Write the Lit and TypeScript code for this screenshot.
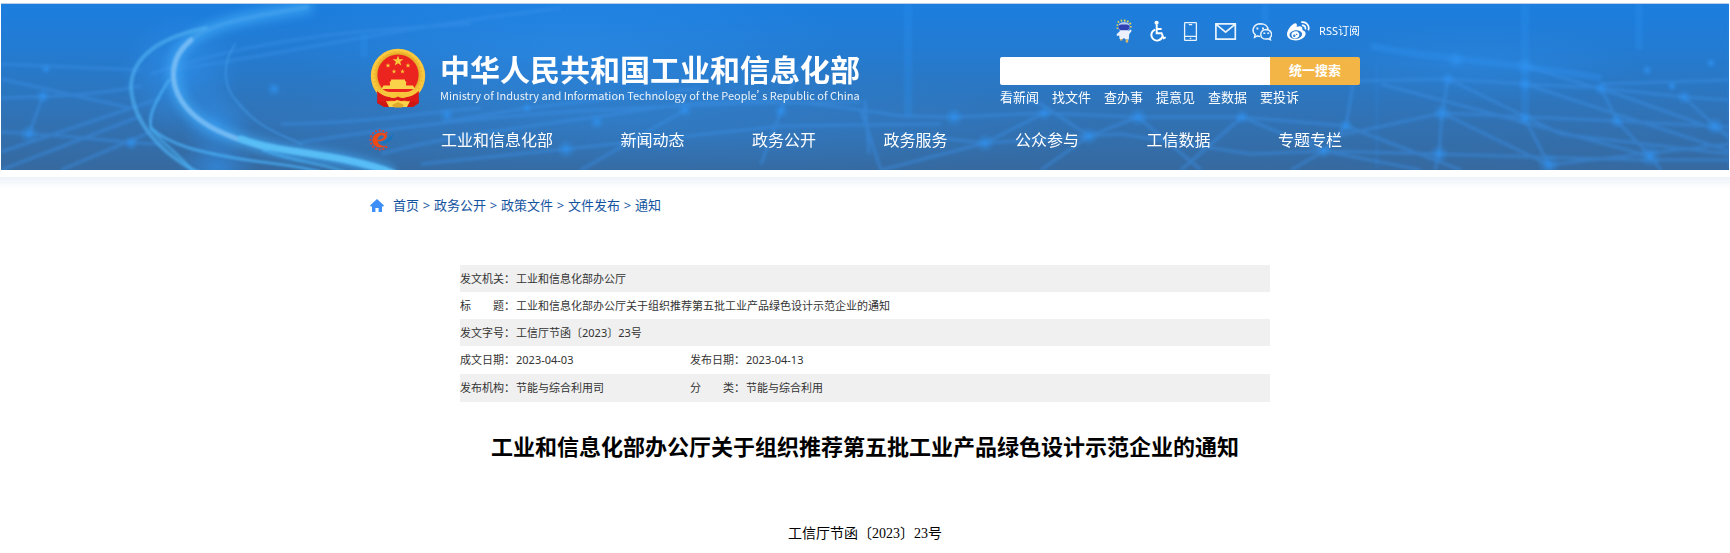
import { LitElement, html, svg, css } from "lit";
import { customElement, property } from "lit/decorators.js";

const NAV = ["工业和信息化部", "新闻动态", "政务公开", "政务服务", "公众参与", "工信数据", "专题专栏"];
const QUICK = ["看新闻", "找文件", "查办事", "提意见", "查数据", "要投诉"];
const CRUMBS = ["首页", "政务公开", "政策文件", "文件发布", "通知"];

const star = (cx: number, cy: number, r: number) => {
  const pts = Array.from({ length: 10 }, (_, i) => {
    const a = (Math.PI / 5) * i - Math.PI / 2;
    const q = i % 2 ? r * 0.4 : r;
    return `${(cx + q * Math.cos(a)).toFixed(2)},${(cy + q * Math.sin(a)).toFixed(2)}`;
  });
  return svg`<polygon points=${pts.join(" ")} fill="#f9c93c" />`;
};

@customElement("banner-backdrop")
class BannerBackdrop extends LitElement {
  static styles = css`
    :host { display: block; }
    svg { display: block; width: 100%; height: 100%; }
  `;

  render() {
    const nodes = [
      [42, 92, 4], [28, 130, 5], [130, 139, 4], [45, 65, 3], [273, 85, 4], [446, 111, 4], [526, 104, 3],
      [565, 145, 5], [596, 118, 4], [684, 106, 4], [780, 107, 4], [953, 113, 5], [984, 139, 5], [1043, 109, 4],
      [1088, 132, 5], [1137, 113, 5], [1241, 113, 4], [1345, 122, 4], [1323, 147, 4], [1447, 75, 4], [1441, 109, 5],
      [1438, 150, 5], [1524, 62, 5], [1524, 80, 4], [1524, 115, 4], [1548, 161, 6], [1600, 84, 4], [1616, 117, 4],
      [1649, 152, 6], [1683, 93, 4], [1714, 122, 5], [1646, 66, 3], [1671, 82, 3], [1710, 59, 3], [1455, 56, 5],
    ];
    return html`
      <svg viewBox="0 0 1728 166" preserveAspectRatio="none" aria-hidden="true">
        <defs>
          <linearGradient id="base" x1="0" y1="0" x2="0" y2="1">
            <stop offset="0" stop-color="#1c7edf" />
            <stop offset="0.3" stop-color="#247bd0" />
            <stop offset="0.65" stop-color="#3073b7" />
            <stop offset="1" stop-color="#36699f" />
          </linearGradient>
          <radialGradient id="glow">
            <stop offset="0" stop-color="#2f93f2" stop-opacity="0.6" />
            <stop offset="1" stop-color="#2f93f2" stop-opacity="0" />
          </radialGradient>
          <filter id="soft" x="-10%" y="-20%" width="120%" height="140%"><feGaussianBlur stdDeviation="1.2" /></filter>
          <filter id="haze" x="-10%" y="-20%" width="120%" height="140%"><feGaussianBlur stdDeviation="1.6" /></filter>
          <filter id="wide" x="-20%" y="-20%" width="140%" height="140%"><feGaussianBlur stdDeviation="5" /></filter>
        </defs>
        <rect width="1728" height="166" fill="url(#base)" />
        <ellipse cx="570" cy="45" rx="280" ry="80" fill="url(#glow)" opacity="0.7" />
        <ellipse cx="180" cy="70" rx="60" ry="60" fill="url(#glow)" />
        <ellipse cx="216" cy="120" rx="36" ry="36" fill="url(#glow)" />
        <ellipse cx="640" cy="120" rx="460" ry="60" fill="url(#glow)" opacity="0.45" />
        <ellipse cx="1480" cy="60" rx="160" ry="40" fill="url(#glow)" opacity="0.5" />
        <ellipse cx="216" cy="163" rx="40" ry="26" fill="url(#glow)" />

        <g fill="none" stroke="#3a92ea" stroke-width="3" filter="url(#haze)" opacity="0.46">
          <path d="M0 94C50 92 90 92 140 82M0 128C80 132 110 138 160 140M0 148L160 94M0 60L140 66M28 130L42 92M0 75L130 104M60 166L150 128M0 166L140 112" />
          <path d="M150 70C250 36 350 26 470 20M172 66C280 50 420 20 560 4M280 120C390 118 420 108 480 104M300 138C420 120 560 100 860 98M420 160L565 145L780 122L940 120" />
          <path d="M380 150C450 130 540 122 640 106S800 96 900 112M440 118L526 104L700 84M580 166L684 106M760 160L780 107L800 60M860 106L880 166M864 96L868 150" />
          <path d="M900 112L953 113L1043 109L1137 113L1241 113L1345 122M900 130L984 139L1120 130L1250 150L1323 147L1438 150L1640 156L1728 156" />
          <path d="M880 166L984 139L1043 109M1088 132L1040 100L1000 90M1137 113L1088 132L1040 166M1137 113L1200 166M1241 113L1180 166M1345 122L1323 147L1290 166M1241 113L1323 147L1420 166" />
          <path d="M1300 140L1441 109L1616 117L1728 123M1200 80L1447 75L1524 80L1600 84L1683 93L1728 96M1447 75L1441 109L1438 150L1434 166M1345 122L1352 80M1345 122L1460 166M1441 109L1548 161M1524 115L1548 161L1728 140" />
          <path d="M1600 84L1616 117L1649 152L1660 166M1683 93L1714 122L1728 134M1380 80L1649 152M1447 75L1560 130L1728 150M1524 80L1728 147M1600 80L1728 76M1524 62L1616 90L1728 130" />
        </g>
        <g fill="none" stroke="#2b90f0" filter="url(#haze)" opacity="0.45">
          <path stroke-width="8" d="M1524 -8V115M907 -8V112" opacity="0.65" />
          <path stroke-width="7" d="M1638 -8V46M363 30V54M1264 -8V20" opacity="0.65" />
          <path stroke-width="7" d="M1370 42C1420 54 1530 60 1600 74" opacity="0.9" />
          <path stroke-width="4" d="M1376 60V166M1728 0V166" opacity="0.3" />
        </g>
        ${nodes.map(([x, y, r]) => svg`<circle cx=${x} cy=${y} r=${r * 2} fill="url(#glow)" /><circle cx=${x} cy=${y} r=${r} fill="url(#glow)" opacity="0.5" />`)}

        <g fill="none" stroke-linecap="round">
          <path d="M306 3C255 12 215 18 190 35C166 55 172 78 180 96C196 122 230 136 283 147C330 153 350 156 388 168" stroke="#41aaf8" stroke-width="12" filter="url(#wide)" opacity="0.7" />
          <g filter="url(#soft)">
            <path d="M306 3C255 12 215 18 195 32C182 42 173 55 172 68" stroke="#4ba3ee" stroke-width="4" opacity="0.5" />
            <path d="M190 36C168 54 169 78 180 96C196 122 230 134 265 144" stroke="#78bcf5" stroke-width="5" opacity="0.9" />
            <path d="M240 135C280 150 335 148 392 169" stroke="#58bdf5" stroke-width="7" />
            <path d="M205 24C145 36 130 62 130 84C132 112 150 134 166 148C178 158 188 164 200 170" stroke="#4badf0" stroke-width="4" opacity="0.7" />
            <path d="M168 76C150 104 148 114 150 124C170 142 200 148 234 154S290 160 320 168" stroke="#48aaf0" stroke-width="3" opacity="0.8" />
            <path d="M234 40C220 62 222 84 238 100C260 126 280 130 300 140" stroke="#429bea" stroke-width="2" opacity="0.6" />
            <path d="M150 124C160 140 180 150 192 168M262 146C300 160 320 158 350 170" stroke="#48b0f4" stroke-width="3" opacity="0.6" />
          </g>
        </g>
      </svg>
    `;
  }
}

@customElement("national-emblem")
class NationalEmblem extends LitElement {
  static styles = css`
    :host { display: block; }
    svg { display: block; width: 56px; height: 60px; }
  `;

  render() {
    return html`
      <svg viewBox="0 0 56 60" role="img" aria-label="国徽">
        <defs>
          <radialGradient id="gold" cx="0.5" cy="0.48" r="0.52">
            <stop offset="0.72" stop-color="#dfa524" />
            <stop offset="0.86" stop-color="#fdcb40" />
            <stop offset="1" stop-color="#f8c038" />
          </radialGradient>
        </defs>
        <path d="M8 42L7 55L14 59H43L49 55L48 42Z" fill="#cf1712" />
        <circle cx="28" cy="28" r="27.2" fill="url(#gold)" />
        <circle cx="28" cy="28" r="24" fill="none" stroke="#efb42c" stroke-width="1.2" stroke-dasharray="2 2" />
        <circle cx="28" cy="27" r="20.6" fill="#ec2420" />
        ${star(28, 13, 5.6)} ${star(18, 17.5, 2.6)} ${star(38, 17.5, 2.6)} ${star(24, 23.5, 2.4)} ${star(32.5, 23.5, 2.4)}
        <path d="M21 33V31.5H35V33L37 34.5H36V37.5H43L45 41H11.5L13.5 37.5H20V34.5H19Z" fill="#fbd34a" />
        <path d="M11.5 41C16 45 24 44 28 44C32 44 40 45 45 41L46 45C40 51 34 48 28 52C22 48 16 51 10 45Z" fill="#f8c63c" />
        <path d="M7 43C13 48 18 50 23 49L28 45L33 49C38 50 43 48 49 43L48 54C42 54 36 52 32 53L28 55L24 53C20 52 14 54 8 54Z" fill="#dd1a17" />
        <path d="M20 49C23 48 25 45 28 45C31 45 33 48 36 49C34 51 31 50 28 48.5C25 50 22 51 20 49Z" fill="#f7c337" />
        <path d="M16 53L22 54L27 52L34 54L40 53L37 59H33L28 56L23 59H19Z" fill="#fbd34a" />
        <path d="M22 57L28 54L34 57L32 59.5H24Z" fill="#e0a92a" />
      </svg>
    `;
  }
}

@customElement("tool-icon")
class ToolIcon extends LitElement {
  @property() name = "";

  static styles = css`
    :host { display: block; }
    svg { display: block; height: 24px; }
    .w20 { width: 20px; }
    .w24 { width: 24px; }
  `;

  render() {
    switch (this.name) {
      case "robot":
        return html`<svg class="w20" viewBox="0 0 20 24" aria-hidden="true">
          <path d="M6 3.5C8 0.5 17 0.5 18.6 5.5V9" fill="none" stroke="#e4d24e" stroke-width="2" stroke-dasharray="1.6 1.6" />
          <path d="M5.4 10V4.5" fill="none" stroke="#e4d24e" stroke-width="1.6" stroke-dasharray="1.6 1.6" />
          <path d="M7 5C9 2.6 15 2.6 17 5L17.5 10L15.5 12.5H8.5L6.5 10Z" fill="#b9cdf2" />
          <rect x="6.6" y="5.4" width="10.8" height="5.6" rx="2.8" fill="#3042b4" />
          <path d="M8 12H16L19 10.6L19.6 12L17.2 15.2L16.8 20.4H13.6L12 19L10.6 20H7.6L7.2 16.5L5 17L4.6 15.2Z" fill="#edf1fb" />
          <path d="M8 20H10.4V21.6H8ZM13.8 20.6H16.4L16 23.4H13.6Z" fill="#dcb565" />
        </svg>`;
      case "wheelchair":
        return html`<svg class="w20" viewBox="0 0 20 24" fill="none" stroke="#fff" stroke-width="1.9" aria-hidden="true">
          <circle cx="10.6" cy="3.8" r="2.1" fill="#fff" stroke="none" />
          <path d="M10.7 6V14.2H15.6L17.6 19.3L19.8 18.4M10.9 10H15.6" />
          <path d="M9.3 10.6A5.6 5.6 0 1 0 16.3 17.6" />
        </svg>`;
      case "phone":
        return html`<svg class="w20" viewBox="0 0 20 24" fill="none" stroke="#e9f3fd" stroke-width="1.3" aria-hidden="true">
          <rect x="4.6" y="3.6" width="11.8" height="17.8" rx="0.6" />
          <path d="M4.6 17.3H16.4M8.8 5.7H12.2M9.8 19.4H11.2" />
        </svg>`;
      case "mail":
        return html`<svg class="w24" viewBox="0 0 24 24" fill="none" stroke="#e9f3fd" stroke-width="1.7" aria-hidden="true">
          <path d="M1.9 4.9H21.3V20.1H1.9ZM2.2 5.4L11.6 13.2L21 5.4" />
        </svg>`;
      case "wechat":
        return html`<svg class="w20" viewBox="0 0 20 24" fill="none" stroke="#e9f3fd" stroke-width="1.5" aria-hidden="true">
          <path d="M8.2 17.4C7.2 17.4 6.2 17.3 5.3 16.9L2.6 18.4L3.2 15.6C-0.7 12.6 0.8 4.8 8.6 4.7C12.8 4.8 15.8 7.2 16 10.4" />
          <path d="M14.2 10.5C7 10.8 7 20 14.2 20.1L16.3 19.8L18.4 20.8L18 18.8C21.3 15.8 19 10.6 14.2 10.5Z" />
          <path d="M5.4 8.6V10.4M11 8.6V10.4M12.3 13.5V15M16.2 13.5V15" stroke-width="1.9" />
        </svg>`;
      default:
        return html`<svg class="w24" viewBox="0 0 24 24" aria-hidden="true">
          <path d="M9.5 4.3C11.3 4.6 11.1 6.5 10.6 8C13 7 16.8 6.7 16.4 10.2C16.3 11 16.8 11.3 17.5 11.6C22.3 14 18.8 21.2 10 21.5C4.6 21.5 1 18.9 1 15.3C1 10.8 6.4 4.4 9.5 4.3Z" fill="#fff" />
          <ellipse cx="9.8" cy="15.6" rx="6.4" ry="4.4" transform="rotate(-8 9.8 15.6)" fill="#2a7dd2" />
          <ellipse cx="9.4" cy="15.9" rx="3.9" ry="3.5" transform="rotate(-20 9.4 15.9)" fill="#fff" />
          <circle cx="8.3" cy="16.8" r="1.2" fill="#2a7dd2" />
          <circle cx="10.6" cy="15.4" r="0.7" fill="#2a7dd2" />
          <path d="M15.3 3.2C20.3 2.2 24 6.8 22.3 11.4M15.9 6.4C18.4 6 20 8.1 19.2 10.4" fill="none" stroke="#fff" stroke-width="1.7" />
        </svg>`;
    }
  }
}

@customElement("app-root")
class AppRoot extends LitElement {
  static styles = css`
    :host {
      display: block;
      padding-top: 3px;
      background: #fff;
      color: #333;
      font-family: "Noto Sans", "Noto Sans CJK SC", sans-serif;
    }
    * { box-sizing: border-box; }
    a { color: inherit; text-decoration: none; }
    .wrap { width: min(990px, 100%); margin: 0 auto; }

    .banner { position: relative; margin: 0 1px; border-top: 1px solid #b9cfe8; color: #fff; }
    .backdrop { position: absolute; inset: 0; }
    .inner { position: relative; padding-bottom: 18px; }
    .masthead { display: flex; justify-content: space-between; align-items: flex-start; padding-top: 14px; }

    .brand { display: flex; gap: 14px; padding-top: 30px; }
    .names { display: flex; flex-direction: column; padding-top: 3px; white-space: nowrap; }
    .name { margin: 0; font: 700 30px/34px "Noto Sans CJK SC", sans-serif; }
    .english { font: 400 11px/20px "Noto Sans CJK SC", sans-serif; font-feature-settings: "palt"; opacity: 0.9; }

    .side { width: 360px; }
    .tools { display: flex; justify-content: flex-end; align-items: center; gap: 14px; height: 26px; }
    .rss { margin-left: -5px; font-size: 11px; line-height: 24px; }
    .search { display: flex; height: 28px; margin-top: 13px; border-radius: 2px; overflow: hidden; }
    .search input { flex: 1; min-width: 0; border: 0; padding: 0 8px; background: #fff; font: inherit; font-size: 13px; outline: 0; }
    .search button {
      width: 90px; border: 0; padding: 0 0 3px; background: #f3b545; color: #fff;
      font-family: inherit; font-size: 13px; font-weight: 700;
    }
    .quick { display: flex; gap: 13px; padding-top: 2px; font-size: 13px; line-height: 20px; }

    .menu { display: flex; align-items: center; padding-top: 20px; }
    .menu svg { display: block; width: 27px; height: 22px; margin-left: -3px; }
    .links { display: flex; flex: 1; justify-content: space-between; padding: 0 18px 0 47px; font-size: 16px; line-height: 24px; white-space: nowrap; }

    .shade { height: 12px; margin-top: 7px; background: linear-gradient(#eef3f9, #fff); }
    .crumbs { display: flex; align-items: center; padding-top: 6px; color: #14549f; font-size: 13px; line-height: 20px; }
    .crumbs svg { display: block; width: 14px; height: 13px; margin-right: 9px; }
    .sep { width: 15px; text-align: center; }

    .info { width: min(810px, 100%); margin: 50px auto 0; border-collapse: collapse; table-layout: fixed; font-size: 11px; line-height: 17px; }
    .info th, .info td { padding: 5px 0; text-align: left; font-weight: 400; white-space: pre; }
    .info .tall > * { padding-bottom: 6px; }
    .info tr:nth-child(odd) { background: #f0f0f0; }
    .label { width: 56px; }
    .value { width: 174px; }

    .title { margin: 28px 0 0; text-align: center; color: #000; font-size: 22px; line-height: 32px; font-weight: 700; }
    .number { margin: 0; padding: 62px 0 9px; text-align: center; color: #000; font: 14px/20px "Liberation Serif", "Noto Sans CJK SC", serif; }
  `;

  render() {
    const teeth = Array.from({ length: 13 }, (_, i) => {
      const a = ((48 + i * 22) * Math.PI) / 180;
      return svg`<circle cx=${(13 + 9.6 * Math.cos(a)).toFixed(2)} cy=${(11 + 9.6 * Math.sin(a)).toFixed(2)} r="1.1" fill="#e2402a" />`;
    });
    return html`
      <header class="banner">
        <banner-backdrop class="backdrop"></banner-backdrop>
        <div class="wrap inner">
          <div class="masthead">
            <div class="brand">
              <national-emblem></national-emblem>
              <div class="names">
                <h1 class="name">中华人民共和国工业和信息化部</h1>
                <span class="english">Ministry of Industry and Information Technology of the People’s Republic of China</span>
              </div>
            </div>
            <div class="side">
              <div class="tools">
                ${[
                  ["robot", "智能问答"],
                  ["wheelchair", "无障碍"],
                  ["phone", "手机版"],
                  ["mail", "邮箱"],
                  ["wechat", "微信"],
                  ["weibo", "微博"],
                ].map(([icon, label]) => html`<a href="#" aria-label=${label}><tool-icon name=${icon}></tool-icon></a>`)}
                <a class="rss" href="#">RSS订阅</a>
              </div>
              <form class="search" @submit=${(e: Event) => e.preventDefault()}>
                <input type="text" aria-label="搜索" />
                <button type="submit">统一搜索</button>
              </form>
              <div class="quick">${QUICK.map((t) => html`<a href="#">${t}</a>`)}</div>
            </div>
          </div>
          <nav class="menu">
            <svg viewBox="0 0 27 22" aria-hidden="true">
              ${teeth}
              <path d="M19.5 16.4C15.5 19.8 6.6 19.6 5.4 12.2C4.8 5.6 12 2 17.6 4C22.4 6.4 19.4 12.6 10.6 12.6C11.4 16 15.6 17.8 19.5 16.4ZM10.4 10.8C14.6 10.8 18 8.6 16.6 6.8C14.6 5.2 10.8 7 10.4 10.8Z" fill="#ee4a16" />
              <path d="M13.4 13.4C18.6 13.4 21 9.6 22.2 8.6C23 6.8 24.8 6.2 26 5.2C26.2 8.8 22.4 14.6 16 14.8Z" fill="#1673bd" />
            </svg>
            <div class="links">${NAV.map((t) => html`<a href="#">${t}</a>`)}</div>
          </nav>
        </div>
      </header>
      <div class="shade"></div>
      <nav class="wrap crumbs">
        <svg viewBox="0 0 14 13" aria-hidden="true">
          <path d="M7 0L14 6.6L13.2 7.6H12V13H8.6V9H5.4V13H2V7.6H0.8L0 6.6Z" fill="#3e8ef7" />
        </svg>
        ${CRUMBS.map((t, i) => html`${i ? html`<span class="sep">&gt;</span>` : ""}<a href="#">${t}</a>`)}
      </nav>
      <main>
        <table class="info">
          <colgroup><col class="label" /><col class="value" /><col class="label" /><col /></colgroup>
          <tr><th scope="row">发文机关：</th><td colspan="3">工业和信息化部办公厅</td></tr>
          <tr><th scope="row">标　　题：</th><td colspan="3">工业和信息化部办公厅关于组织推荐第五批工业产品绿色设计示范企业的通知</td></tr>
          <tr><th scope="row">发文字号：</th><td colspan="3">工信厅节函〔2023〕23号</td></tr>
          <tr class="tall"><th scope="row">成文日期：</th><td>2023-04-03</td><th scope="row">发布日期：</th><td>2023-04-13</td></tr>
          <tr class="tall"><th scope="row">发布机构：</th><td>节能与综合利用司</td><th scope="row">分　　类：</th><td>节能与综合利用</td></tr>
        </table>
        <h2 class="title">工业和信息化部办公厅关于组织推荐第五批工业产品绿色设计示范企业的通知</h2>
        <p class="number">工信厅节函〔2023〕23号</p>
      </main>
    `;
  }
}
